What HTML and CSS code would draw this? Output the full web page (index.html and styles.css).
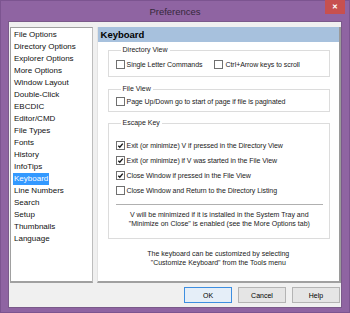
FILE: index.html
```html
<!DOCTYPE html>
<html lang="en">
<head>
    <meta charset="UTF-8">
    <title>Preferences</title>
    <link rel="stylesheet" href="styles.css">
</head>
<body>
    <div class="window">
        <div class="titlebar">
            <span class="title">Preferences</span>
            <div class="close">&#x2715;</div>
        </div>

        <div class="client">
            <div class="main">
                <ul class="pages">
                    <li><span>File Options</span></li>
                    <li><span>Directory Options</span></li>
                    <li><span>Explorer Options</span></li>
                    <li><span>More Options</span></li>
                    <li><span>Window Layout</span></li>
                    <li><span>Double-Click</span></li>
                    <li><span>EBCDIC</span></li>
                    <li><span>Editor/CMD</span></li>
                    <li><span>File Types</span></li>
                    <li><span>Fonts</span></li>
                    <li><span>History</span></li>
                    <li><span>InfoTips</span></li>
                    <li><span class="selected">Keyboard</span></li>
                    <li><span>Line Numbers</span></li>
                    <li><span>Search</span></li>
                    <li><span>Setup</span></li>
                    <li><span>Thumbnails</span></li>
                    <li><span>Language</span></li>
                </ul>

                <div class="panel">
                    <div class="panel-header">Keyboard</div>

                    <fieldset class="group group-dir">
                        <legend>Directory View</legend>
                        <div class="row">
                            <label class="check"><span class="box"></span>Single Letter Commands</label>
                            <label class="check"><span class="box"></span>Ctrl+Arrow keys to scroll</label>
                        </div>
                    </fieldset>

                    <fieldset class="group group-file">
                        <legend>File View</legend>
                        <div class="row">
                            <label class="check"><span class="box"></span>Page Up/Down go to start of page if file is paginated</label>
                        </div>
                    </fieldset>

                    <fieldset class="group group-esc">
                        <legend>Escape Key</legend>
                        <div class="rows">
                            <label class="check"><span class="box on"><svg viewBox="0 0 8 8"><path d="M1.5 4.2 L3.2 6 L6.6 1.8" /></svg></span>Exit (or minimize) V if pressed in the Directory View</label>
                            <label class="check"><span class="box on"><svg viewBox="0 0 8 8"><path d="M1.5 4.2 L3.2 6 L6.6 1.8" /></svg></span>Exit (or minimize) if V was started in the File View</label>
                            <label class="check"><span class="box on"><svg viewBox="0 0 8 8"><path d="M1.5 4.2 L3.2 6 L6.6 1.8" /></svg></span>Close Window if pressed in the File View</label>
                            <label class="check"><span class="box"></span>Close Window and Return to the Directory Listing</label>
                        </div>
                        <div class="separator"></div>
                        <p class="note">V will be minimized if it is installed in the System Tray and<br>"Minimize on Close" is enabled (see the More Options tab)</p>
                    </fieldset>

                    <p class="hint">The keyboard can be customized by selecting<br>"Customize Keyboard" from the Tools menu</p>
                </div>
            </div>

            <div class="buttons">
                <button class="default">OK</button>
                <button>Cancel</button>
                <button>Help</button>
            </div>
        </div>
    </div>
</body>
</html>
```

FILE: styles.css
```css
body {
    margin: 0;
    font-family: 'Liberation Sans', Arial, sans-serif;
    color: #000;
}

.window {
    width: 350px;
    height: 313px;
    box-sizing: border-box;
    background: #8f64a2;
    border: 1px solid #7c5490;
    display: flex;
    flex-direction: column;
}

.titlebar {
    height: 20px;
    position: relative;
    display: flex;
    align-items: center;
    justify-content: center;
}

.title {
    font-size: 9.5px;
    color: #35283c;
}

.close {
    position: absolute;
    top: -1px;
    right: 4px;
    width: 20px;
    height: 14px;
    background: #c7504f;
    color: #fff;
    font-size: 7px;
    font-weight: bold;
    display: flex;
    align-items: center;
    justify-content: center;
}

.client {
    flex: 1;
    margin: 0 7px 4px 7px;
    background: #f0f0f0;
    border: 1px solid #7a5a8a;
    display: flex;
    flex-direction: column;
    padding: 5px 0 0 1px;
}

.main {
    display: flex;
    gap: 4px;
    height: 256px;
}

.pages {
    list-style: none;
    margin: 0;
    padding: 1px 0 0 2px;
    width: 79px;
    background: #fff;
    border: 1px solid #a0a0a0;
    border-right-color: #bdbdbd;
    border-bottom: 2px solid #a0a0a0;
    font-size: 8px;
    color: #111;
}

.pages li {
    height: 12px;
    line-height: 12px;
}

.pages li span {
    display: inline-block;
    padding: 0 1px;
}

.pages .selected {
    background: #3399ff;
    color: #fff;
}

.panel {
    width: 243px;
    background: #fff;
    border-left: 1px solid #e3e3e3;
    border-right: 2px solid #9a9a9a;
    border-bottom: 2px solid #a0a0a0;
    font-size: 7px;
    color: #1a1a1a;
    display: flex;
    flex-direction: column;
}

.panel-header {
    height: 15px;
    line-height: 16px;
    background: #a7c1dd;
    font-size: 9.5px;
    font-weight: bold;
    color: #000;
    padding-left: 3px;
}

.group {
    margin: 0 9px 0 10px;
    padding: 0;
    border: 1px solid #dcdcdc;
}

.group legend {
    margin-left: 5px;
    padding: 0 2px;
    line-height: 10px;
}

.group-dir {
    margin-top: 3px;
    padding: 4px 0 7px 7px;
}

.group-file {
    margin-top: 7px;
    padding: 2px 0 5px 7px;
}

.group-esc {
    margin-top: 6px;
    padding: 10px 6px 4px 7px;
}

.row {
    display: flex;
    gap: 12px;
}

.rows {
    display: flex;
    flex-direction: column;
}

.rows .check {
    height: 15px;
}

.check {
    display: flex;
    align-items: center;
    gap: 2px;
    height: 10px;
    white-space: nowrap;
    letter-spacing: -0.05px;
}

.box {
    width: 7px;
    height: 7px;
    border: 1px solid #707070;
    background: #fff;
    display: inline-block;
    flex: none;
}

.box svg {
    width: 7px;
    height: 7px;
    display: block;
}

.box path {
    fill: none;
    stroke: #1a1a1a;
    stroke-width: 1.6;
}

.separator {
    border-top: 1px solid #b0b0b0;
    margin: 6px 0 0 0;
}

.note {
    margin: 5px 0 6px 0;
    text-align: center;
    line-height: 9px;
}

.hint {
    margin: 11px 0 0 0;
    text-align: center;
    line-height: 8.5px;
}

.buttons {
    display: flex;
    justify-content: flex-end;
    gap: 6px;
    padding: 4px 1px 0 0;
}

.buttons button {
    width: 48px;
    height: 16px;
    padding: 0;
    font-family: 'Liberation Sans', Arial, sans-serif;
    font-size: 7px;
    background: #e5e5e5;
    border: 1px solid #b4b4b4;
    color: #000;
}

.buttons .default {
    border-color: #3d8ee0;
    background: #e5eef8;
}
```
